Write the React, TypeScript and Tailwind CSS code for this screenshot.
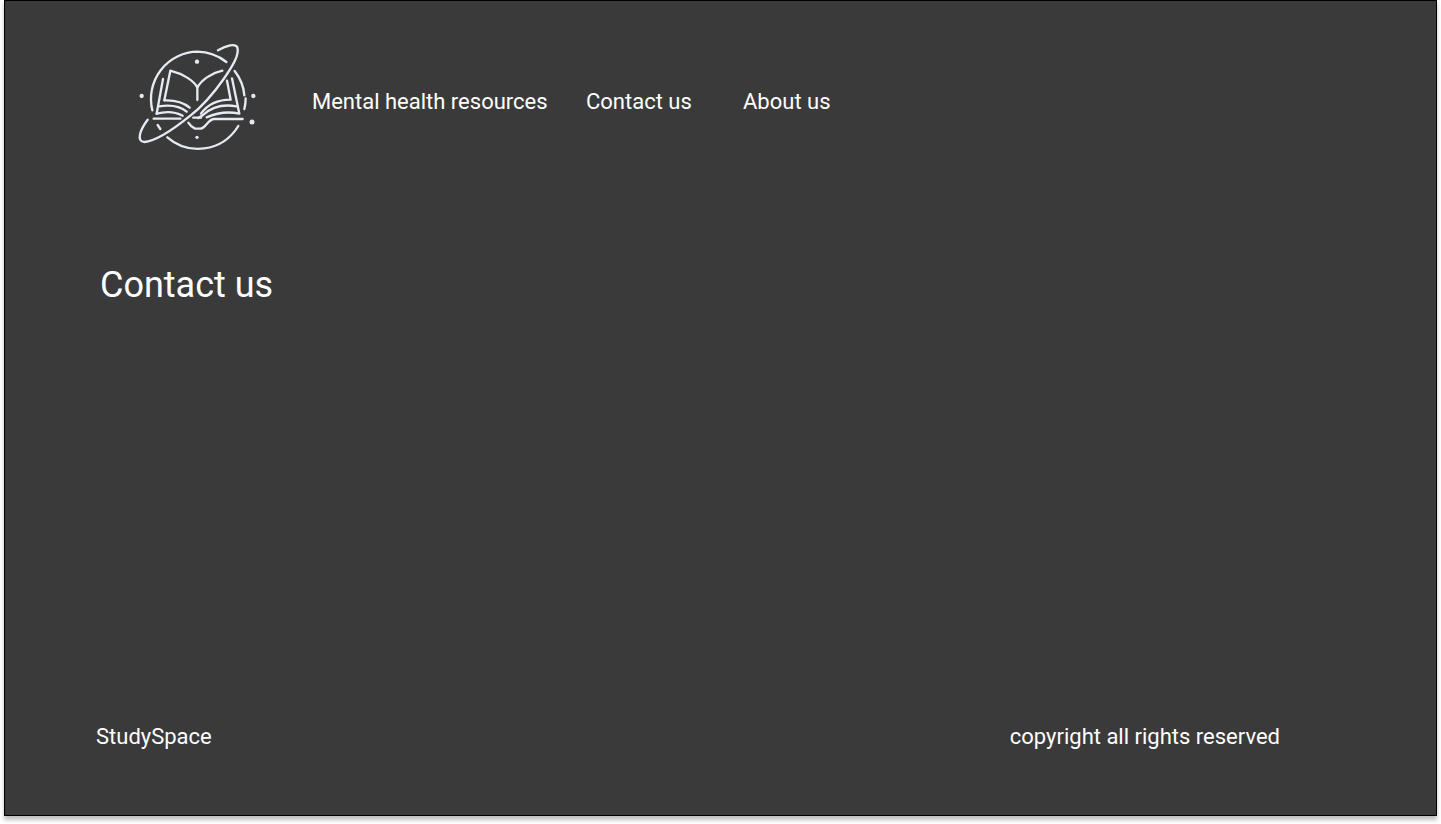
function Logo() {
  return (
    <svg
      viewBox="0 0 408 375"
      className="h-[125px] w-[136px] shrink-0"
      fill="none"
      stroke="#e6eaf2"
      strokeWidth="7"
      strokeLinecap="round"
      strokeLinejoin="round"
      role="img"
      aria-label="StudySpace"
    >
      {/* planet outline */}
      <path d="M67 226A142 142 0 0 1 202 50A143 143 0 0 1 289 81" />
      <path d="M314 108C332 131 341 155 343 181" />
      <path d="M347 190Q347 206 343 222" />
      <path d="M112 307C173 360 275 354 325 273" />
      <path d="M83 270L91 282" />
      {/* orbit */}
      <path d="M264 46C290 31 316 25 322 37C329 59 308 93 281 132C250 176 216 215 181 242C139 276 82 318 43 321C18 320 30 284 53 254" />
      {/* book */}
      <path d="M103 196L121 107C161 117 192 138 202 157C215 135 244 114 277 107" />
      <path d="M202 157V195" />
      <path d="M103 196C135 195 160 201 179 218" />
      <path d="M99 132L80 236" />
      <path d="M87 214C123 208 152 215 170 230" />
      <path d="M80 236C109 228 137 231 158 242" />
      <path d="M71 251H151" />
      <path d="M291 137L302 194C265 194 236 204 213 236" />
      <path d="M306 130L328 236C290 228 259 234 230 247" />
      <path d="M319 214C275 206 244 217 219 240L205 249" />
      <path d="M190 248H213" />
      <path d="M338 252H253C235 252 229 276 213 281H195Q183 276 175 263" />
      {/* stars */}
      <g fill="#e6eaf2" stroke="none">
        <circle cx="201" cy="80" r="6.5" />
        <circle cx="35" cy="183" r="6.5" />
        <circle cx="370" cy="183" r="6.5" />
        <circle cx="366" cy="261" r="7.5" />
        <circle cx="201" cy="307" r="5" />
      </g>
    </svg>
  );
}

export default function App() {
  return (
    <div className="h-[824px] overflow-hidden bg-white pr-1 pl-1 font-['Roboto',sans-serif] text-white">
      <div className="flex h-[816px] w-[1433px] flex-col border border-black bg-[#3a3a3a] shadow-[0_4px_4px_rgba(0,0,0,0.25)]">
        <header className="flex items-start pt-[34px] pl-[125px]">
          <Logo />
          <nav className="flex pt-[54px] pl-[46px] text-[22px] leading-[26px] whitespace-nowrap">
            <a className="w-[274px]">Mental health resources</a>
            <a className="w-[157px]">Contact us</a>
            <a>About us</a>
          </nav>
        </header>
        <main className="flex-1 pt-[104px] pl-[95px]">
          <h1 className="text-[36px] leading-[42px]">Contact us</h1>
        </main>
        <footer className="flex justify-between pr-[156px] pb-[65px] pl-[91px] text-[22px] leading-[26px]">
          <span>StudySpace</span>
          <span>copyright all rights reserved</span>
        </footer>
      </div>
    </div>
  );
}
